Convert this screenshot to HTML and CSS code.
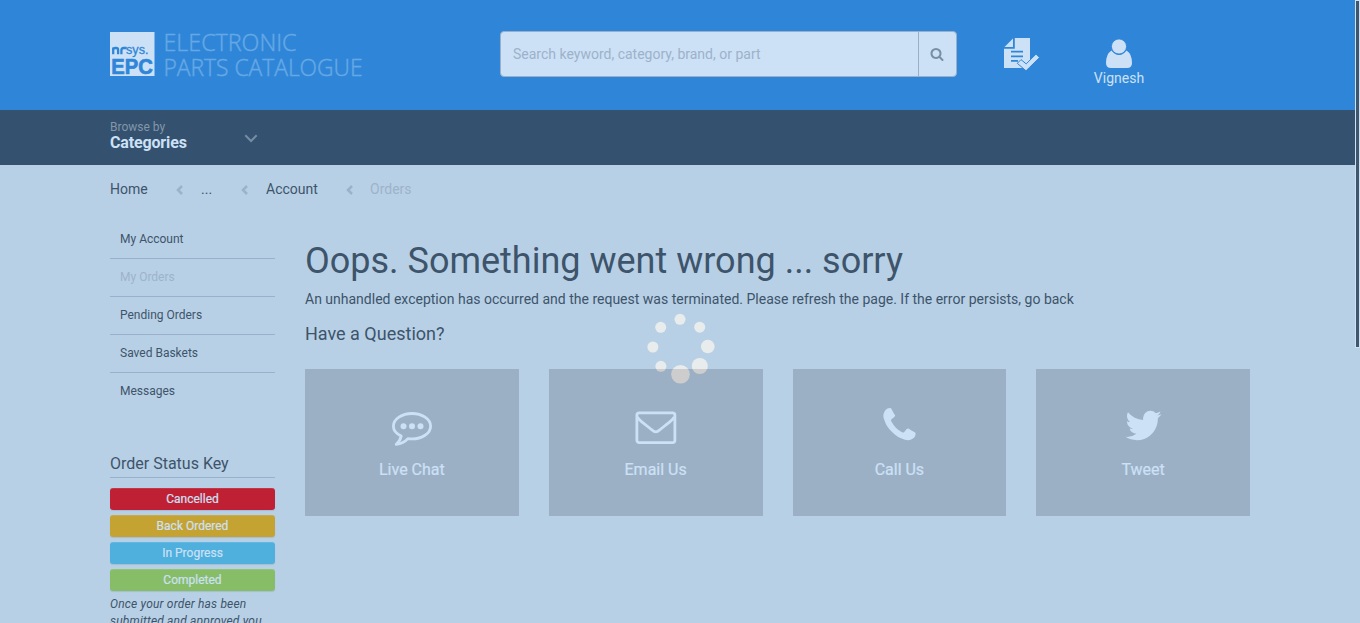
FILE: index.html
```html
<!DOCTYPE html>
<html lang="en">
<head>
<meta charset="utf-8">
<title>Orders</title>
<link rel="stylesheet" href="styles.css">
</head>
<body>
<div class="page">
  <header class="header">
    <svg class="logo" width="254" height="48" viewBox="0 0 254 48">
      <rect x="0" y="1" width="44.500" height="44" class="logo-box"/>
      <path d="M3.200 23.200V16.500M3.200 18.500q.3-1.500 2-1.500h1q1.900 0 1.900 2v4.200M11.400 23.200v-3.700q0-2.500 2.300-2.500h3" class="logo-mark"/>
      <text x="16" y="23" class="logo-sys" textLength="22.500" lengthAdjust="spacingAndGlyphs">sys.</text>
      <text x="1.300" y="42.500" class="logo-epc" textLength="41.500" lengthAdjust="spacingAndGlyphs">EPC</text>
      <text x="53.500" y="20" class="logo-name" textLength="133" lengthAdjust="spacingAndGlyphs">ELECTRONIC</text>
      <text x="53.500" y="45" class="logo-name" textLength="199" lengthAdjust="spacingAndGlyphs">PARTS CATALOGUE</text>
    </svg>
    <div class="search">
      <div class="search-input">Search keyword, category, brand, or part</div>
      <div class="search-button">
        <svg width="14" height="14" viewBox="0 0 1792 1792"><path d="M1216 832q0-185-131.500-316.500t-316.500-131.500-316.500 131.500-131.500 316.500 131.500 316.500 316.500 131.500 316.500-131.500 131.500-316.500zm512 832q0 52-38 90t-90 38q-54 0-90-38l-343-342q-179 124-399 124-143 0-273.500-55.500t-225-150-150-225-55.500-273.500 55.500-273.500 150-225 225-150 273.500-55.500 273.500 55.500 225 150 150 225 55.500 273.500q0 220-124 399l343 343q37 37 37 90z"/></svg>
      </div>
    </div>
    <svg class="orders-icon" width="36" height="34" viewBox="0 0 36 34">
      <path d="M10.800 0H26v30H0V10.800h10.800z" class="light"/>
      <path d="M9 .5V9H.5z" class="light"/>
      <path d="M7 13.700h12M7 18.300h12M7 22.800h7" class="doc-lines"/>
      <path d="M13.300 25.300l3.700-3.700 5.200 4.300 9.800-9.800 3.500 3.500L22 32.800z" class="check"/>
    </svg>
    <div class="user">
      <svg width="26" height="29" viewBox="0 0 26 29">
        <path d="M5.500 11.500Q9 16 13 16t7.500-4.500Q26 15 26 24q0 5-5 5H5q-5 0-5-5 0-9 5.500-12.500z" class="light"/>
        <circle cx="13" cy="7.500" r="7.600" class="user-head"/>
      </svg>
      <span>Vignesh</span>
    </div>
  </header>
  <nav class="nav">
    <div class="browse"><span>Browse by</span><b>Categories</b></div>
    <svg width="14" height="9" viewBox="0 0 14 9"><path d="M1.300 1.300L7 7l5.700-5.700" class="nav-chevron"/></svg>
  </nav>
  <div class="content">
    <div class="breadcrumb">
      <span class="crumb home">Home</span>
      <svg width="7" height="10" viewBox="0 0 7 10"><path d="M6 1L2 5l4 4"/></svg>
      <span class="crumb dots">...</span>
      <svg width="7" height="10" viewBox="0 0 7 10"><path d="M6 1L2 5l4 4"/></svg>
      <span class="crumb account">Account</span>
      <svg width="7" height="10" viewBox="0 0 7 10"><path d="M6 1L2 5l4 4"/></svg>
      <span class="crumb current">Orders</span>
    </div>
    <div class="columns">
      <aside class="sidebar">
        <ul class="menu">
          <li>My Account</li>
          <li class="active">My Orders</li>
          <li>Pending Orders</li>
          <li>Saved Baskets</li>
          <li>Messages</li>
        </ul>
        <h2 class="key-title">Order Status Key</h2>
        <div class="key cancelled">Cancelled</div>
        <div class="key back">Back Ordered</div>
        <div class="key progress">In Progress</div>
        <div class="key completed">Completed</div>
        <p class="key-note">Once your order has been<br>submitted and approved you</p>
      </aside>
      <main class="main">
        <h1>Oops. Something went wrong ... sorry</h1>
        <p class="message">An unhandled exception has occurred and the request was terminated. Please refresh the page. If the error persists, go back</p>
        <h3>Have a Question?</h3>
        <div class="cards">
          <div class="card">
            <svg width="40" height="40" viewBox="0 0 40 40">
              <path d="M20 8C10 8 1.400 13.500 1.400 20.700c0 4 3 7.500 7.800 9.900-.8 3.600-2.200 5.900-5 8.200 5.500-.6 9-2.700 11.700-5.700 1.300.2 2.700.3 4.100.3 10 0 18.600-5.500 18.600-12.700S30 8 20 8z" class="stroke"/>
              <circle cx="11.500" cy="20.700" r="3" class="light"/><circle cx="20" cy="20.700" r="3" class="light"/><circle cx="28.500" cy="20.700" r="3" class="light"/>
            </svg>
            <span>Live Chat</span>
          </div>
          <div class="card">
            <svg width="42" height="40" viewBox="0 0 42 40">
              <rect x="1.900" y="7.400" width="38" height="29.700" rx="2.300" class="stroke"/>
              <path d="M2.300 11.500c1 2 2.500 3.200 4.500 4.800l9 7.200c2 1.600 3.200 2.800 5 2.800s3-1.200 5-2.800l9-7.200c2-1.600 3.500-2.800 4.500-4.800" class="stroke"/>
            </svg>
            <span>Email Us</span>
          </div>
          <div class="card">
            <svg width="41" height="41" viewBox="0 0 1792 1792"><path class="light" d="M1600 1240q0 27-10 70.500t-21 68.500q-21 50-122 106-94 51-186 51-27 0-53-3.500t-57.500-12.500-47-14.500-55.500-20.500-49-18q-98-35-175-83-127-79-264-216t-216-264q-48-77-83-175-3-9-18-49t-20.500-55.500-14.500-47-12.500-57.500-3.500-53q0-92 51-186 56-101 106-122 25-11 68.500-21t70.500-10q14 0 21 3 18 6 53 76 11 19 30 54t35 63.500 31 53.500q3 4 17.500 25t21.500 35.500 7 28.500q0 20-28.500 50t-62 55-62 53-28.500 46q0 9 5 22.500t8.500 20.500 14 24 11.500 19q76 137 174 235t235 174q2 1 19 11.500t24 14 20.500 8.500 22.500 5q18 0 46-28.500t53-62 55-62 50-28.500q14 0 28.500 7t35.500 21.500 25 17.500q25 15 53.500 31t63.500 35 54 30q70 35 76 53 3 7 3 21z"/></svg>
            <span>Call Us</span>
          </div>
          <div class="card">
            <svg width="41" height="41" viewBox="0 0 1792 1792"><path class="light" d="M1684 408q-67 98-162 167 1 14 1 42 0 130-38 259.500t-115.500 248.500-184.500 210.500-258 146-323 54.500q-271 0-496-145 35 4 78 4 225 0 401-138-105-2-188-64.500t-114-159.500q33 5 61 5 43 0 85-11-112-23-185.500-111.500t-73.500-205.500v-4q68 38 146 41-66-44-105-115t-39-154q0-88 44-163 121 149 294.500 238.500t371.500 99.500q-8-38-8-74 0-134 94.500-228.500t228.500-94.500q140 0 236 102 109-21 205-78-37 115-142 178 93-10 186-50z"/></svg>
            <span>Tweet</span>
          </div>
        </div>
      </main>
    </div>
  </div>
</div>
<div class="scrollbar"><div class="thumb"></div></div>
<svg class="spinner" width="70" height="72" viewBox="0 0 70 72">
  <defs>
    <linearGradient id="dot" gradientUnits="userSpaceOnUse" x1="0" y1="0" x2="0" y2="72">
      <stop offset=".7778" stop-color="#e8ecec"/><stop offset=".7778" stop-color="#cecdcd"/>
    </linearGradient>
  </defs>
  <g fill="url(#dot)">
  <circle cx="35" cy="6.300" r="5.500"/><circle cx="54.700" cy="14.200" r="5.500"/><circle cx="62.800" cy="33.500" r="6.800"/><circle cx="54.800" cy="53" r="8"/>
  <circle cx="35.500" cy="61.300" r="9.300"/><circle cx="15.900" cy="53.300" r="5.500"/><circle cx="7.900" cy="34" r="5.500"/><circle cx="15.700" cy="14.300" r="5.500"/>
  </g>
</svg>
</body>
</html>
```
FILE: styles.css
```css
* { box-sizing: border-box; }
body {
  margin: 0;
  height: 623px;
  overflow: hidden;
  display: flex;
  background: #b8d0e5;
  color: #3d546b;
  font-family: Roboto, sans-serif;
  font-size: 14px;
}
svg { display: block; flex: none; }
h1, h2, h3, p, ul { margin: 0; padding: 0; font-weight: 400; }
.light { fill: #cce1f6; }
.page { width: 1355px; height: 623px; overflow: hidden; }

.header {
  height: 110px;
  background: #2f86d8;
  display: flex;
  align-items: flex-start;
  padding-left: 110px;
}
.logo { margin-top: 31px; overflow: visible; }
.logo-box { fill: #cce1f6; }
.logo-mark { fill: none; stroke: #2f86d8; stroke-width: 2.3; }
.logo-sys { font: 400 13px "Liberation Sans", sans-serif; fill: #2f86d8; stroke: #2f86d8; stroke-width: .3; }
.logo-epc { font: 700 21.500px "Liberation Sans", sans-serif; fill: #2f86d8; stroke: #2f86d8; stroke-width: .7; }
.logo-name { font: 300 24px "Open Sans", sans-serif; fill: #66a8e5; stroke: #66a8e5; stroke-width: .45; }
.search {
  margin: 31px 0 0 136px;
  width: 457px;
  height: 46px;
  display: flex;
  background: #cce1f5;
  border: 1px solid #9bb0c8;
  border-radius: 4px;
}
.search-input { flex: 1; padding-left: 12px; line-height: 44px; color: #9cb2ca; }
.search-button {
  width: 38px;
  border-left: 1px solid #9bb0c8;
  display: flex;
  align-items: center;
  justify-content: center;
  padding-right: 1px;
  fill: #768fa5;
}
.orders-icon { margin: 38px 0 0 47px; }
.doc-lines { stroke: #2f86d8; stroke-width: 1.7; fill: none; }
.check { fill: #cce1f6; stroke: #2f86d8; stroke-width: 1; }
.user {
  margin: 39px 0 0 49px;
  width: 60px;
  display: flex;
  flex-direction: column;
  align-items: center;
  color: #cce1f6;
  line-height: 20px;
}
.user-head { fill: #cce1f6; stroke: #2f86d8; stroke-width: 1; }

.nav { height: 55px; background: #345170; display: flex; padding-left: 110px; }
.nav svg { margin-top: 24px; }
.nav-chevron { fill: none; stroke: #748da2; stroke-width: 2; }
.browse { width: 134px; padding-top: 9px; display: flex; flex-direction: column; }
.browse span { font-size: 12px; line-height: 16px; color: #8397a9; }
.browse b { font-size: 16px; line-height: 16px; color: #cce1f6; letter-spacing: -.15px; }

.content { padding-left: 110px; }
.breadcrumb { height: 55px; padding-top: 14px; display: flex; line-height: 20px; }
.breadcrumb svg { margin-top: 6px; fill: none; stroke: #9bb2ca; stroke-width: 2.5; }
.home { width: 66px; }
.dots { width: 58px; padding-left: 18px; }
.account { width: 98px; padding-left: 18px; }
.current { padding-left: 17px; color: #9db3cb; }

.columns { display: flex; gap: 30px; }
.sidebar { width: 165px; flex: none; }
.menu { list-style: none; font-size: 12px; }
.menu li { height: 38px; padding-left: 10px; line-height: 37px; border-bottom: 1px solid #9ab0cc; }
.menu li:first-child { height: 39px; line-height: 38px; }
.menu li:last-child { border: 0; }
.menu .active { color: #9db3cb; }
.key-title {
  margin: 43px 0 10px;
  height: 24px;
  font-size: 16px;
  line-height: 20px;
  border-bottom: 1px solid #9ab0cc;
}
.key {
  height: 22px;
  margin-bottom: 5px;
  border-radius: 3px;
  font-size: 12px;
  line-height: 22px;
  text-align: center;
  color: #cce1f6;
  -webkit-text-stroke: .2px #cce1f6;
  box-shadow: inset 0 1px 0 rgba(255, 255, 255, .1), 0 1px 1px rgba(60, 90, 120, .15);
}
.cancelled { background: #bf2033; }
.back { background: #c4a332; }
.progress { background: #4fafdd; }
.completed { background: #88bd68; }
.key-note { font-size: 12px; line-height: 17px; font-style: italic; letter-spacing: .18px; white-space: nowrap; }

.main { width: 945px; }
h1 { padding-top: 20px; font-size: 36px; line-height: 42px; }
.message { margin-top: 7px; line-height: 20px; }
h3 { margin-top: 14px; font-size: 18px; line-height: 22px; }
.cards { margin-top: 24px; display: grid; grid-template-columns: repeat(4, 1fr); gap: 30px; }
.card {
  height: 147px;
  padding-top: 36px;
  background: #9cb0c5;
  color: #cce1f6;
  display: flex;
  flex-direction: column;
  align-items: center;
  font-size: 16px;
}
.card svg { height: 41px; }
.card span { margin-top: 14px; line-height: 20px; -webkit-text-stroke: .2px #cce1f6; }
.stroke { fill: none; stroke: #cce1f6; stroke-width: 2.800; stroke-linejoin: round; }

.scrollbar { width: 5px; height: 623px; padding: 1px 1px 0; background: #b8d0e5; }
.thumb { width: 3px; height: 346px; background: #40566b; outline: 1px solid #cce1f6; }
.spinner { position: absolute; left: 645px; top: 313px; }
```
